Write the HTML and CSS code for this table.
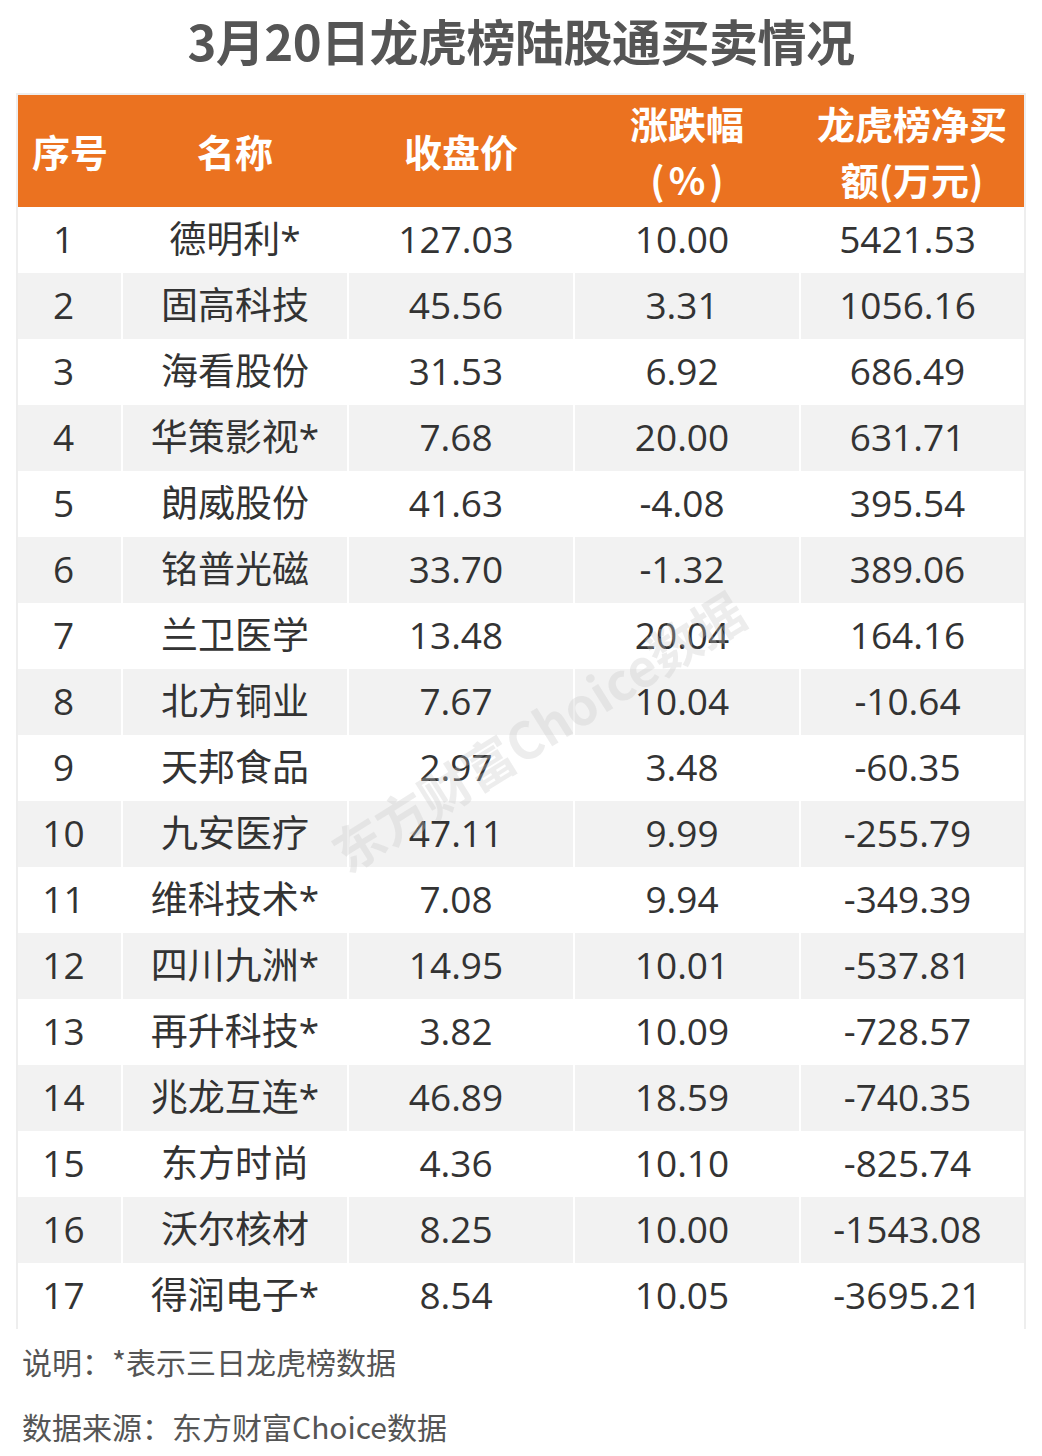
FILE: index.html
```html
<!DOCTYPE html>
<html lang="zh-CN">
<head>
<meta charset="utf-8">
<title>3月20日龙虎榜陆股通买卖情况</title>
<link rel="stylesheet" href="styles.css">
</head>
<body>
<div class="page">
  <h1 class="title">3月20日龙虎榜陆股通买卖情况</h1>
  <div class="table-wrap">
    <table class="data">
      <colgroup>
        <col class="c1"><col class="c2"><col class="c3"><col class="c4"><col class="c5">
      </colgroup>
      <thead>
        <tr>
          <th>序号</th>
          <th>名称</th>
          <th>收盘价</th>
          <th>涨跌幅<br><span class="pct">(%)</span></th>
          <th>龙虎榜净买<br>额(万元)</th>
        </tr>
      </thead>
      <tbody>
        <tr><td class="idx">1</td><td>德明利*</td><td class="num">127.03</td><td class="num">10.00</td><td class="num">5421.53</td></tr>
        <tr><td class="idx">2</td><td>固高科技</td><td class="num">45.56</td><td class="num">3.31</td><td class="num">1056.16</td></tr>
        <tr><td class="idx">3</td><td>海看股份</td><td class="num">31.53</td><td class="num">6.92</td><td class="num">686.49</td></tr>
        <tr><td class="idx">4</td><td>华策影视*</td><td class="num">7.68</td><td class="num">20.00</td><td class="num">631.71</td></tr>
        <tr><td class="idx">5</td><td>朗威股份</td><td class="num">41.63</td><td class="num">-4.08</td><td class="num">395.54</td></tr>
        <tr><td class="idx">6</td><td>铭普光磁</td><td class="num">33.70</td><td class="num">-1.32</td><td class="num">389.06</td></tr>
        <tr><td class="idx">7</td><td>兰卫医学</td><td class="num">13.48</td><td class="num">20.04</td><td class="num">164.16</td></tr>
        <tr><td class="idx">8</td><td>北方铜业</td><td class="num">7.67</td><td class="num">10.04</td><td class="num">-10.64</td></tr>
        <tr><td class="idx">9</td><td>天邦食品</td><td class="num">2.97</td><td class="num">3.48</td><td class="num">-60.35</td></tr>
        <tr><td class="idx">10</td><td>九安医疗</td><td class="num">47.11</td><td class="num">9.99</td><td class="num">-255.79</td></tr>
        <tr><td class="idx">11</td><td>维科技术*</td><td class="num">7.08</td><td class="num">9.94</td><td class="num">-349.39</td></tr>
        <tr><td class="idx">12</td><td>四川九洲*</td><td class="num">14.95</td><td class="num">10.01</td><td class="num">-537.81</td></tr>
        <tr><td class="idx">13</td><td>再升科技*</td><td class="num">3.82</td><td class="num">10.09</td><td class="num">-728.57</td></tr>
        <tr><td class="idx">14</td><td>兆龙互连*</td><td class="num">46.89</td><td class="num">18.59</td><td class="num">-740.35</td></tr>
        <tr><td class="idx">15</td><td>东方时尚</td><td class="num">4.36</td><td class="num">10.10</td><td class="num">-825.74</td></tr>
        <tr><td class="idx">16</td><td>沃尔核材</td><td class="num">8.25</td><td class="num">10.00</td><td class="num">-1543.08</td></tr>
        <tr><td class="idx">17</td><td>得润电子*</td><td class="num">8.54</td><td class="num">10.05</td><td class="num">-3695.21</td></tr>
      </tbody>
    </table>
    <div class="watermark">东方财富Choice数据</div>
  </div>
  <div class="notes">
    <p class="note">说明：*表示三日龙虎榜数据</p>
    <p class="note">数据来源：东方财富Choice数据</p>
  </div>
</div>
</body>
</html>
```

FILE: styles.css
```css
html, body {
  margin: 0;
  padding: 0;
  background: #ffffff;
}

body {
  font-family: "Open Sans", "Noto Sans", "Noto Sans CJK SC", sans-serif;
  color: #333333;
}

.page {
  width: 1042px;
}

.title {
  margin: 10px 0 0 0;
  height: 60px;
  line-height: 60px;
  text-align: center;
  font-family: "Noto Sans CJK SC", "Noto Sans", sans-serif;
  font-weight: 700;
  font-size: 49px;
  color: #555555;
  letter-spacing: -0.5px;
}

.table-wrap {
  position: relative;
  margin: 23px 16px 0 16px;
  border: 2px solid #eeeeee;
  border-bottom: none;
  overflow: hidden;
}

.data {
  width: 100%;
  border-collapse: collapse;
  table-layout: fixed;
}

.c1 { width: 104px; }
.c2 { width: 226px; }
.c3 { width: 226px; }
.c4 { width: 226px; }
.c5 { width: 224px; }

.data th {
  background: #eb7220;
  color: #ffffff;
  font-family: "Noto Sans CJK SC", "Noto Sans", sans-serif;
  font-weight: 700;
  font-size: 38px;
  line-height: 56px;
  height: 110px;
  padding: 0;
  text-align: center;
  vertical-align: middle;
}

.data th .pct {
  letter-spacing: 4px;
  margin-left: 4px;
}

.data td {
  height: 64px;
  padding: 0 0 2px 0;
  text-align: center;
  vertical-align: middle;
  font-size: 37px;
  line-height: 40px;
  color: #333333;
  font-family: "Open Sans", "Noto Sans CJK SC", sans-serif;
}

.data td + td {
  border-left: 2px solid #ffffff;
}

.data tbody tr:nth-child(even) td {
  background: #f2f2f2;
}

.data td.idx {
  padding-right: 12px;
}

.data td.num {
  padding-right: 10px;
}

.watermark {
  position: absolute;
  left: 219px;
  top: 605px;
  width: 600px;
  text-align: center;
  transform: rotate(-32deg);
  font-family: "Noto Sans CJK SC", "Noto Sans", sans-serif;
  font-weight: 700;
  font-size: 51px;
  line-height: 60px;
  color: rgba(200, 200, 200, 0.32);
  white-space: nowrap;
  pointer-events: none;
}

.notes {
  padding-left: 22px;
}

.note {
  margin: 0;
  height: 65px;
  line-height: 65px;
  font-family: "Noto Sans CJK SC", "Noto Sans", sans-serif;
  font-size: 30px;
  color: #555555;
}
```
